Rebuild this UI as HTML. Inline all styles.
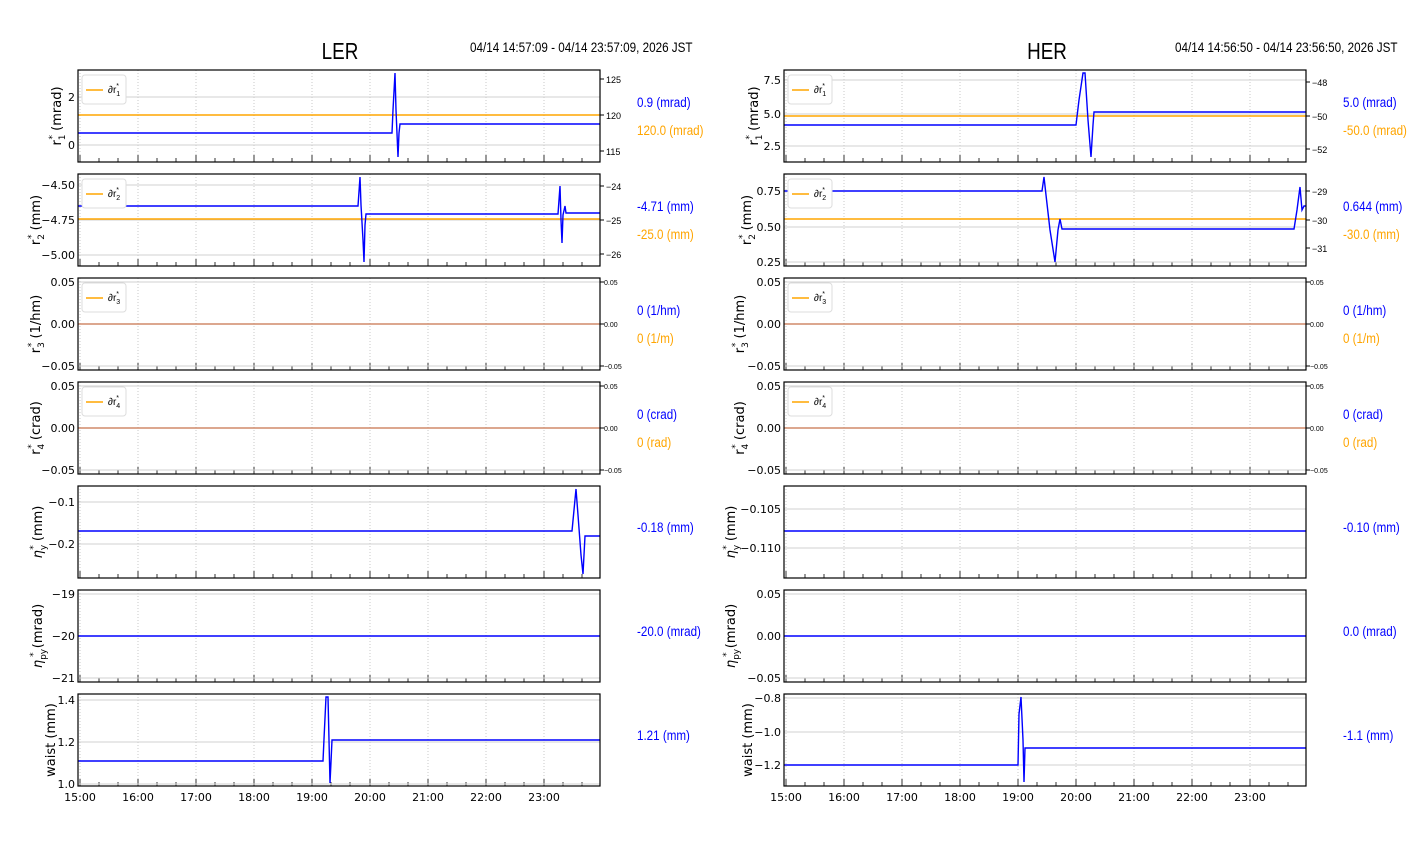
<!DOCTYPE html>
<html><head><meta charset="utf-8"><style>
html,body{margin:0;padding:0;background:#fff;width:1412px;height:864px;overflow:hidden}
svg{display:block}
.t{font-family:"DejaVu Sans",sans-serif;font-size:11px;fill:#000}
.n{font-family:"Liberation Sans",sans-serif}
.rt{font-family:"Liberation Sans",sans-serif;font-size:9px;fill:#000}
.yl{font-family:"DejaVu Sans",sans-serif;font-size:13px;fill:#000}
.vb{font-family:"Liberation Sans",sans-serif;font-size:14px;fill:#0000ff}
.vo{font-family:"Liberation Sans",sans-serif;font-size:14px;fill:#ffa500}
.b{fill:none;stroke:#0000ff;stroke-width:1.4}
.o{fill:none;stroke:#ffa500;stroke-width:1.4}
.hg{stroke:#d0d0d0;stroke-width:1}
</style></head><body>
<svg width="1412" height="864" viewBox="0 0 1412 864" xmlns="http://www.w3.org/2000/svg">
<defs>
<g id="vg">
<g stroke="#c8c8c8" stroke-dasharray="1,2" stroke-width="1">
<line x1="2" y1="0" x2="2" y2="92"/><line x1="60" y1="0" x2="60" y2="92"/><line x1="118" y1="0" x2="118" y2="92"/><line x1="176" y1="0" x2="176" y2="92"/><line x1="234" y1="0" x2="234" y2="92"/><line x1="292" y1="0" x2="292" y2="92"/><line x1="350" y1="0" x2="350" y2="92"/><line x1="408" y1="0" x2="408" y2="92"/><line x1="466" y1="0" x2="466" y2="92"/>
</g>
<g stroke="#333" stroke-width="1">
<path d="M2 92v-7M60 92v-7M118 92v-7M176 92v-7M234 92v-7M292 92v-7M350 92v-7M408 92v-7M466 92v-7"/>
<path d="M21 92v-4M40 92v-4M79 92v-4M98 92v-4M137 92v-4M156 92v-4M195 92v-4M214 92v-4M253 92v-4M272 92v-4M311 92v-4M330 92v-4M369 92v-4M388 92v-4M427 92v-4M446 92v-4M485 92v-4M504 92v-4"/>
</g>
</g>
<rect id="fr" x="0" y="0" width="522" height="92" fill="none" stroke="#000" stroke-width="1.2"/>
</defs>

<g transform="translate(340,0) scale(0.82,1)"><text x="0" y="59" text-anchor="middle" class="n" font-size="23">LER</text></g>
<g transform="translate(470,0) scale(0.835,1)"><text x="0" y="52" class="n" font-size="14">04/14 14:57:09 - 04/14 23:57:09, 2026 JST</text></g>
<g transform="translate(1047,0) scale(0.82,1)"><text x="0" y="59" text-anchor="middle" class="n" font-size="23">HER</text></g>
<g transform="translate(1175,0) scale(0.835,1)"><text x="0" y="52" class="n" font-size="14">04/14 14:56:50 - 04/14 23:56:50, 2026 JST</text></g>

<use href="#vg" x="78" y="70"/><use href="#vg" x="78" y="174"/><use href="#vg" x="78" y="278"/><use href="#vg" x="78" y="382"/><use href="#vg" x="78" y="486"/><use href="#vg" x="78" y="590"/><use href="#vg" x="78" y="694"/>
<use href="#vg" x="784" y="70"/><use href="#vg" x="784" y="174"/><use href="#vg" x="784" y="278"/><use href="#vg" x="784" y="382"/><use href="#vg" x="784" y="486"/><use href="#vg" x="784" y="590"/><use href="#vg" x="784" y="694"/>

<g class="hg">
<path d="M78 97H600M78 145H600M78 185H600M78 220H600M78 255H600M78 282H600M78 324H600M78 366H600M78 386H600M78 428H600M78 470H600M78 502H600M78 544H600M78 594H600M78 636H600M78 678H600M78 700H600M78 742H600M78 784H600"/>
<path d="M784 80H1306M784 114H1306M784 146H1306M784 191H1306M784 227H1306M784 262H1306M784 282H1306M784 324H1306M784 366H1306M784 386H1306M784 428H1306M784 470H1306M784 509H1306M784 548H1306M784 594H1306M784 636H1306M784 678H1306M784 698H1306M784 732H1306M784 765H1306"/>
</g>

<path class="o" d="M78 115H600"/>
<path class="b" d="M78 133H392L393 110L395 73L396 110L398 157L399 133L400 124H600"/>
<path class="o" d="M78 219H600"/>
<path class="b" d="M78 206H358L360 177L361 205L363 240L364 262L365 225L366 214H558L560 186L561 220L562 243L563 215L565 206L566 213H600"/>
<path d="M78 324H600M78 428H600M784 324H1306M784 428H1306" style="fill:none;stroke:#d08a6a;stroke-width:1.6"/>
<path class="b" d="M78 531H572L574 510L576 489L578 515L581 555L583 574L585 536H600"/>
<path class="b" d="M78 636H600"/>
<path class="b" d="M78 761H323L324 739L325 718L326 697H328L329 740L330 783L331 762L332 740H600"/>

<path class="o" d="M784 116H1306"/>
<path class="b" d="M784 125H1076L1079 100L1083 73H1085L1088 120L1091 157L1093 125L1094 112H1306"/>
<path class="o" d="M784 219H1306"/>
<path class="b" d="M784 191H1042L1044 177L1046 195L1050 230L1055 262L1058 230L1060 219L1062 229H1294L1297 210L1300 187L1302 210L1304 206H1306"/>
<path class="b" d="M784 531H1306"/>
<path class="b" d="M784 636H1306"/>
<path class="b" d="M784 765H1018L1019 714L1021 697L1023 740L1024 782L1025 748H1306"/>

<use href="#fr" x="78" y="70"/><use href="#fr" x="78" y="174"/><use href="#fr" x="78" y="278"/><use href="#fr" x="78" y="382"/><use href="#fr" x="78" y="486"/><use href="#fr" x="78" y="590"/><use href="#fr" x="78" y="694"/>
<use href="#fr" x="784" y="70"/><use href="#fr" x="784" y="174"/><use href="#fr" x="784" y="278"/><use href="#fr" x="784" y="382"/><use href="#fr" x="784" y="486"/><use href="#fr" x="784" y="590"/><use href="#fr" x="784" y="694"/>

<g fill="#fff" stroke="#ddd">
<rect x="82" y="75" width="44" height="29" rx="3"/><rect x="82" y="179" width="44" height="29" rx="3"/><rect x="82" y="283" width="44" height="29" rx="3"/><rect x="82" y="387" width="44" height="29" rx="3"/>
<rect x="788" y="75" width="44" height="29" rx="3"/><rect x="788" y="179" width="44" height="29" rx="3"/><rect x="788" y="283" width="44" height="29" rx="3"/><rect x="788" y="387" width="44" height="29" rx="3"/>
</g>
<path class="o" d="M86 90H103M86 194H103M86 298H103M86 402H103M792 90H809M792 194H809M792 298H809M792 402H809"/>
<g class="n" font-size="10">
<text x="108" y="93">∂r<tspan font-size="7" dy="3">1</tspan><tspan font-size="7" dx="-4" dy="-8">*</tspan></text>
<text x="108" y="197">∂r<tspan font-size="7" dy="3">2</tspan><tspan font-size="7" dx="-4" dy="-8">*</tspan></text>
<text x="108" y="301">∂r<tspan font-size="7" dy="3">3</tspan><tspan font-size="7" dx="-4" dy="-8">*</tspan></text>
<text x="108" y="405">∂r<tspan font-size="7" dy="3">4</tspan><tspan font-size="7" dx="-4" dy="-8">*</tspan></text>
<text x="814" y="93">∂r<tspan font-size="7" dy="3">1</tspan><tspan font-size="7" dx="-4" dy="-8">*</tspan></text>
<text x="814" y="197">∂r<tspan font-size="7" dy="3">2</tspan><tspan font-size="7" dx="-4" dy="-8">*</tspan></text>
<text x="814" y="301">∂r<tspan font-size="7" dy="3">3</tspan><tspan font-size="7" dx="-4" dy="-8">*</tspan></text>
<text x="814" y="405">∂r<tspan font-size="7" dy="3">4</tspan><tspan font-size="7" dx="-4" dy="-8">*</tspan></text>
</g>

<g class="t" text-anchor="end">
<text x="75" y="101">2</text><text x="75" y="149">0</text>
<text x="75" y="189">−4.50</text><text x="75" y="224">−4.75</text><text x="75" y="259">−5.00</text>
<text x="75" y="286">0.05</text><text x="75" y="328">0.00</text><text x="75" y="370">−0.05</text>
<text x="75" y="390">0.05</text><text x="75" y="432">0.00</text><text x="75" y="474">−0.05</text>
<text x="75" y="506">−0.1</text><text x="75" y="548">−0.2</text>
<text x="75" y="598">−19</text><text x="75" y="640">−20</text><text x="75" y="682">−21</text>
<text x="75" y="704">1.4</text><text x="75" y="746">1.2</text><text x="75" y="788">1.0</text>
<text x="781" y="84">7.5</text><text x="781" y="118">5.0</text><text x="781" y="150">2.5</text>
<text x="781" y="195">0.75</text><text x="781" y="231">0.50</text><text x="781" y="266">0.25</text>
<text x="781" y="286">0.05</text><text x="781" y="328">0.00</text><text x="781" y="370">−0.05</text>
<text x="781" y="390">0.05</text><text x="781" y="432">0.00</text><text x="781" y="474">−0.05</text>
<text x="781" y="513">−0.105</text><text x="781" y="552">−0.110</text>
<text x="781" y="598">0.05</text><text x="781" y="640">0.00</text><text x="781" y="682">−0.05</text>
<text x="781" y="702">−0.8</text><text x="781" y="736">−1.0</text><text x="781" y="769">−1.2</text>
</g>
<g stroke="#000"><path d="M600 79h4M600 115h4M600 151h4M600 186h4M600 220h4M600 254h4M600 282h4M600 324h4M600 366h4M600 386h4M600 428h4M600 470h4M1306 82h4M1306 116h4M1306 149h4M1306 191h4M1306 220h4M1306 248h4M1306 282h4M1306 324h4M1306 366h4M1306 386h4M1306 428h4M1306 470h4"/></g>
<g class="rt">
<text x="606" y="83">125</text><text x="606" y="119">120</text><text x="606" y="155">115</text>
<text x="606" y="190">−24</text><text x="606" y="224">−25</text><text x="606" y="258">−26</text>
<text x="604" y="285" font-size="7">0.05</text><text x="604" y="327" font-size="7">0.00</text><text x="604" y="369" font-size="7">−0.05</text>
<text x="604" y="389" font-size="7">0.05</text><text x="604" y="431" font-size="7">0.00</text><text x="604" y="473" font-size="7">−0.05</text>
<text x="1312" y="86">−48</text><text x="1312" y="120">−50</text><text x="1312" y="153">−52</text>
<text x="1312" y="195">−29</text><text x="1312" y="224">−30</text><text x="1312" y="252">−31</text>
<text x="1310" y="285" font-size="7">0.05</text><text x="1310" y="327" font-size="7">0.00</text><text x="1310" y="369" font-size="7">−0.05</text>
<text x="1310" y="389" font-size="7">0.05</text><text x="1310" y="431" font-size="7">0.00</text><text x="1310" y="473" font-size="7">−0.05</text>
</g>

<g class="yl" text-anchor="middle">
<text transform="translate(61,116) rotate(-90)">r<tspan font-size="9" dy="4">1</tspan><tspan font-size="9" dx="-5" dy="-10">*</tspan><tspan dy="6"> (mrad)</tspan></text>
<text transform="translate(40,220) rotate(-90)">r<tspan font-size="9" dy="4">2</tspan><tspan font-size="9" dx="-5" dy="-10">*</tspan><tspan dy="6"> (mm)</tspan></text>
<text transform="translate(40,324) rotate(-90)">r<tspan font-size="9" dy="4">3</tspan><tspan font-size="9" dx="-5" dy="-10">*</tspan><tspan dy="6"> (1/hm)</tspan></text>
<text transform="translate(40,428) rotate(-90)">r<tspan font-size="9" dy="4">4</tspan><tspan font-size="9" dx="-5" dy="-10">*</tspan><tspan dy="6"> (crad)</tspan></text>
<text transform="translate(42,532) rotate(-90)"><tspan font-style="italic">η</tspan><tspan font-size="9" dy="4">y</tspan><tspan font-size="9" dx="-5" dy="-10">*</tspan><tspan dy="6"> (mm)</tspan></text>
<text transform="translate(42,636) rotate(-90)"><tspan font-style="italic">η</tspan><tspan font-size="9" dy="4">py</tspan><tspan font-size="9" dx="-8" dy="-10">*</tspan><tspan dy="6"> (mrad)</tspan></text>
<text transform="translate(55,740) rotate(-90)">waist (mm)</text>
<text transform="translate(758,116) rotate(-90)">r<tspan font-size="9" dy="4">1</tspan><tspan font-size="9" dx="-5" dy="-10">*</tspan><tspan dy="6"> (mrad)</tspan></text>
<text transform="translate(751,220) rotate(-90)">r<tspan font-size="9" dy="4">2</tspan><tspan font-size="9" dx="-5" dy="-10">*</tspan><tspan dy="6"> (mm)</tspan></text>
<text transform="translate(744,324) rotate(-90)">r<tspan font-size="9" dy="4">3</tspan><tspan font-size="9" dx="-5" dy="-10">*</tspan><tspan dy="6"> (1/hm)</tspan></text>
<text transform="translate(744,428) rotate(-90)">r<tspan font-size="9" dy="4">4</tspan><tspan font-size="9" dx="-5" dy="-10">*</tspan><tspan dy="6"> (crad)</tspan></text>
<text transform="translate(735,532) rotate(-90)"><tspan font-style="italic">η</tspan><tspan font-size="9" dy="4">y</tspan><tspan font-size="9" dx="-5" dy="-10">*</tspan><tspan dy="6"> (mm)</tspan></text>
<text transform="translate(735,636) rotate(-90)"><tspan font-style="italic">η</tspan><tspan font-size="9" dy="4">py</tspan><tspan font-size="9" dx="-8" dy="-10">*</tspan><tspan dy="6"> (mrad)</tspan></text>
<text transform="translate(752,740) rotate(-90)">waist (mm)</text>
</g>

<g class="t" text-anchor="middle">
<text x="80" y="801">15:00</text><text x="138" y="801">16:00</text><text x="196" y="801">17:00</text><text x="254" y="801">18:00</text><text x="312" y="801">19:00</text><text x="370" y="801">20:00</text><text x="428" y="801">21:00</text><text x="486" y="801">22:00</text><text x="544" y="801">23:00</text>
<text x="786" y="801">15:00</text><text x="844" y="801">16:00</text><text x="902" y="801">17:00</text><text x="960" y="801">18:00</text><text x="1018" y="801">19:00</text><text x="1076" y="801">20:00</text><text x="1134" y="801">21:00</text><text x="1192" y="801">22:00</text><text x="1250" y="801">23:00</text>
</g>

<g transform="translate(637,0) scale(0.83,1)">
<text x="0" y="107" class="vb">0.9 (mrad)</text><text x="0" y="135" class="vo">120.0 (mrad)</text>
<text x="0" y="211" class="vb">-4.71 (mm)</text><text x="0" y="239" class="vo">-25.0 (mm)</text>
<text x="0" y="315" class="vb">0 (1/hm)</text><text x="0" y="343" class="vo">0 (1/m)</text>
<text x="0" y="419" class="vb">0 (crad)</text><text x="0" y="447" class="vo">0 (rad)</text>
<text x="0" y="532" class="vb">-0.18 (mm)</text>
<text x="0" y="636" class="vb">-20.0 (mrad)</text>
<text x="0" y="740" class="vb">1.21 (mm)</text>
</g>
<g transform="translate(1343,0) scale(0.83,1)">
<text x="0" y="107" class="vb">5.0 (mrad)</text><text x="0" y="135" class="vo">-50.0 (mrad)</text>
<text x="0" y="211" class="vb">0.644 (mm)</text><text x="0" y="239" class="vo">-30.0 (mm)</text>
<text x="0" y="315" class="vb">0 (1/hm)</text><text x="0" y="343" class="vo">0 (1/m)</text>
<text x="0" y="419" class="vb">0 (crad)</text><text x="0" y="447" class="vo">0 (rad)</text>
<text x="0" y="532" class="vb">-0.10 (mm)</text>
<text x="0" y="636" class="vb">0.0 (mrad)</text>
<text x="0" y="740" class="vb">-1.1 (mm)</text>
</g>
</svg>
</body></html>
